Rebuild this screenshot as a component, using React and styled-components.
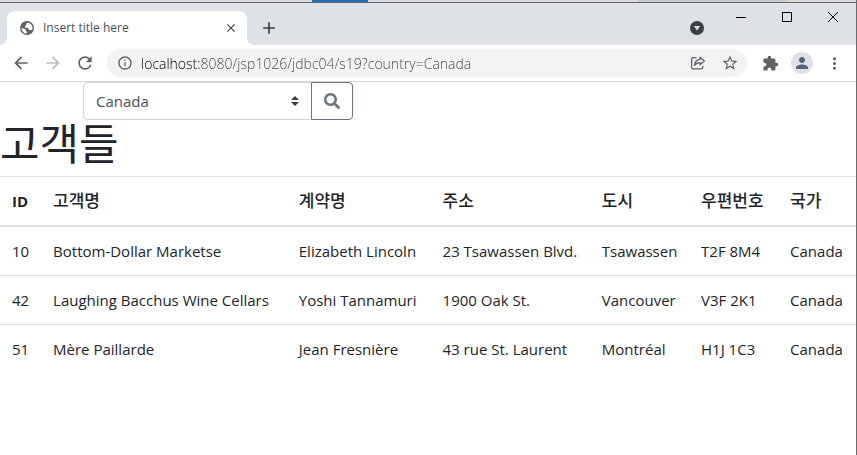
import React, { useState } from 'react';
import styled, { createGlobalStyle } from 'styled-components';
import {
  MdArrowBack,
  MdArrowForward,
  MdRefresh,
  MdInfoOutline,
  MdStarBorder,
  MdExtension,
  MdPerson,
  MdMoreVert,
  MdClose,
  MdAdd
} from 'react-icons/md';
import { FaSearch } from 'react-icons/fa';

const GlobalStyle = createGlobalStyle`
  * {
    box-sizing: border-box;
  }

  body {
    margin: 0;
    background: #fff;
    color: #212529;
    font-family: 'Open Sans', 'Noto Sans CJK KR', sans-serif;
    font-size: 15px;
    line-height: 24px;
  }

  button, input, select {
    font-family: inherit;
    margin: 0;
  }
`;

// Browser window
const Window = styled.div`
  display: flex;
  flex-direction: column;
  min-height: 100vh;
  border-right: 1px solid #6b6b6b;
`;

const Desktop = styled.div`
  height: 3px;
  border-bottom: 1px solid #666;
  background: linear-gradient(
    to right,
    #dcdcdc 36.4%,
    #1a6fb5 36.4% 43%,
    #dcdcdc 43% 74.5%,
    #c8cbd0 74.5% 92%,
    #dcdcdc 92%
  );
`;

const TabStrip = styled.div`
  display: flex;
  height: 42px;
  padding-left: 7px;
  background: #dee1e6;
`;

const Tab = styled.div`
  position: relative;
  display: flex;
  align-items: center;
  width: 240px;
  margin-top: 8px;
  padding: 0 8px 0 12px;
  border-radius: 8px 8px 0 0;
  background: #fff;
  color: #5f6368;

  &::before,
  &::after {
    content: '';
    position: absolute;
    bottom: 0;
    width: 8px;
    height: 8px;
  }

  &::before {
    right: 100%;
    background: radial-gradient(circle at 0 0, transparent 8px, #fff 8px);
  }

  &::after {
    left: 100%;
    background: radial-gradient(circle at 100% 0, transparent 8px, #fff 8px);
  }
`;

const TabTitle = styled.span`
  flex: 1;
  margin-left: 8px;
  font-size: 12px;
  line-height: 16px;
  color: #4d5156;
`;

const IconButton = styled.button`
  display: flex;
  align-items: center;
  justify-content: center;
  flex: none;
  width: ${(props) => props.$size || 28}px;
  height: ${(props) => props.$size || 28}px;
  padding: 0;
  border: 0;
  border-radius: 50%;
  background: none;
  color: ${(props) => props.$color || '#5f6368'};
`;

const NewTab = styled(IconButton)`
  margin: 11px 0 0 8px;
`;

const WindowControls = styled.div`
  display: flex;
  margin-left: auto;
`;

const TabSearch = styled(IconButton)`
  margin: 11px 7px 0 0;
`;

const CaptionButton = styled.button`
  display: flex;
  align-items: center;
  justify-content: center;
  width: 46px;
  height: 28px;
  padding: 0;
  border: 0;
  background: none;
  color: #000;
`;

const Toolbar = styled.div`
  display: flex;
  align-items: center;
  gap: 4px;
  height: 37px;
  padding: 0 8px 0 7px;
  border-bottom: 1px solid #d5d8dc;
`;

const AddressBar = styled.div`
  display: flex;
  align-items: center;
  gap: 4px;
  flex: 1;
  min-width: 0;
  height: 28px;
  margin: 0 5px 0 4px;
  padding: 0 3px 0 10px;
  border-radius: 14px;
  background: #f1f3f4;
  color: #5f6368;
`;

// The host is darker than the rest of the address
const Address = styled.input`
  flex: 1;
  min-width: 0;
  height: 24px;
  margin-left: 4px;
  padding: 0;
  border: 0;
  outline: 0;
  font-size: 14px;
  font-weight: 300;
  color: #44474b;
  background: linear-gradient(to right, #000 59px, #44474b 59px);
  -webkit-background-clip: text;
  background-clip: text;
  -webkit-text-fill-color: transparent;
`;

const Avatar = styled.span`
  display: flex;
  align-items: center;
  justify-content: center;
  width: 22px;
  height: 22px;
  border-radius: 50%;
  background: #dee1e6;
  color: #56607a;
`;

// Page
const Page = styled.main`
  flex: 1;
`;

const SearchForm = styled.form`
  display: flex;
  width: 270px;
  margin-left: 83px;
`;

const CountrySelect = styled.select`
  flex: 1;
  min-width: 0;
  height: 38px;
  padding: 6px 28px 6px 12px;
  border: 1px solid #ced4da;
  border-radius: 4px 0 0 4px;
  appearance: none;
  background: #fff
    url("data:image/svg+xml,%3csvg xmlns='http://www.w3.org/2000/svg' width='4' height='5' viewBox='0 0 4 5'%3e%3cpath fill='%23343a40' d='M2 0L0 2h4zm0 5L0 3h4z'/%3e%3c/svg%3e")
    right 12px center / 8px 10px no-repeat;
  color: #495057;
  font-size: 15px;
  line-height: 24px;
`;

const SearchButton = styled.button`
  display: flex;
  align-items: center;
  justify-content: center;
  width: 42px;
  height: 38px;
  margin-left: -1px;
  padding: 0;
  border: 1px solid #6c757d;
  border-radius: 0 4px 4px 0;
  background: #fff;
  color: #6c757d;
`;

const Heading = styled.h1`
  margin: 0 0 8px;
  font-size: 43px;
  font-weight: 400;
  line-height: 48px;
`;

const Table = styled.table`
  width: 100%;
  border-collapse: collapse;
  table-layout: fixed;
`;

const HeadCell = styled.th`
  width: ${(props) => props.$width};
  padding: 12px 0 12px 12px;
  border-top: 1px solid #dee2e6;
  border-bottom: 2px solid #dee2e6;
  font-size: 17px;
  font-weight: 500;
  text-align: left;
  white-space: nowrap;

  &:first-child {
    font-size: 15px;
    font-weight: 700;
  }
`;

const Cell = styled.td`
  padding: 12px 0 12px 12px;
  border-top: 1px solid #dee2e6;
  white-space: nowrap;
`;

const columns = [
  { key: 'id', label: 'ID', width: '4.8%' },
  { key: 'name', label: '고객명', width: '28.7%' },
  { key: 'contact', label: '계약명', width: '16.8%' },
  { key: 'address', label: '주소', width: '18.6%' },
  { key: 'city', label: '도시', width: '11.6%' },
  { key: 'postal', label: '우편번호', width: '10.4%' },
  { key: 'country', label: '국가', width: '9.1%' }
];

const customers = [
  {
    id: 10,
    name: 'Bottom-Dollar Marketse',
    contact: 'Elizabeth Lincoln',
    address: '23 Tsawassen Blvd.',
    city: 'Tsawassen',
    postal: 'T2F 8M4',
    country: 'Canada'
  },
  {
    id: 42,
    name: 'Laughing Bacchus Wine Cellars',
    contact: 'Yoshi Tannamuri',
    address: '1900 Oak St.',
    city: 'Vancouver',
    postal: 'V3F 2K1',
    country: 'Canada'
  },
  {
    id: 51,
    name: 'Mère Paillarde',
    contact: 'Jean Fresnière',
    address: '43 rue St. Laurent',
    city: 'Montréal',
    postal: 'H1J 1C3',
    country: 'Canada'
  }
];

const GlobeIcon = () => (
  <svg width="16" height="16" viewBox="0 0 16 16">
    <circle cx="8" cy="8" r="7" fill="currentColor" />
    <path
      d="M9.500 2.800C8 3 7.200 3.500 7.300 4.600 7.400 5.500 6.400 5.600 6 6.300c-.4.900.5 1.400 1.500 1.400 1.200 0 2 .3 2 1.300 0 .8.800 1 1.700 1l2-.1a5.600 5.600 0 0 0-3.700-7.100z M2.400 8.200c1.600 0 3.400.1 4 1 .5.800-.1 1.500.7 1.900.9.400.9 1.300.6 2.500A5.600 5.600 0 0 1 2.400 8.200z"
      fill="#fff"
    />
  </svg>
);

const ShareIcon = () => (
  <svg width="16" height="16" viewBox="0 0 16 16" fill="none" stroke="currentColor" strokeWidth="1.3" strokeLinejoin="round">
    <path d="M6.5 2.6H3.2a1.6 1.6 0 0 0-1.6 1.6v8a1.6 1.6 0 0 0 1.6 1.6h8a1.6 1.6 0 0 0 1.6-1.6v-1.4" />
    <path d="M10 2.2 14.4 6 10 9.8V7.6C7.400 7.600 5.800 8.500 4.500 10.400 4.900 7.200 6.800 4.800 10 4.400Z" />
  </svg>
);

const TabSearchIcon = () => (
  <svg width="14" height="14" viewBox="0 0 14 14">
    <circle cx="7" cy="7" r="7" fill="#3c4043" />
    <path d="M3.800 5h6.400L7 9.500z" fill="#dee1e6" />
  </svg>
);

const App = () => {
  const [country, setCountry] = useState('Canada');

  return (
    <>
      <GlobalStyle />
      <Window>
        <Desktop />
        <TabStrip>
          <Tab>
            <GlobeIcon />
            <TabTitle>Insert title here</TabTitle>
            <IconButton $size={16} $color="#3c4043" aria-label="Close tab">
              <MdClose size={14} stroke="currentColor" />
            </IconButton>
          </Tab>
          <NewTab $color="#3c4043" aria-label="New tab">
            <MdAdd size={20} />
          </NewTab>
          <WindowControls>
            <TabSearch aria-label="Search tabs">
              <TabSearchIcon />
            </TabSearch>
            <CaptionButton aria-label="Minimize">
              <svg width="10" height="10" viewBox="0 0 10 10">
                <path d="M0 5.500h10" stroke="currentColor" />
              </svg>
            </CaptionButton>
            <CaptionButton aria-label="Maximize">
              <svg width="10" height="10" viewBox="0 0 10 10">
                <rect x="0.500" y="0.500" width="9" height="9" fill="none" stroke="currentColor" />
              </svg>
            </CaptionButton>
            <CaptionButton aria-label="Close">
              <svg width="10" height="10" viewBox="0 0 10 10">
                <path d="M0 0l10 10M10 0L0 10" stroke="currentColor" />
              </svg>
            </CaptionButton>
          </WindowControls>
        </TabStrip>

        <Toolbar>
          <IconButton aria-label="Back">
            <MdArrowBack size={20} />
          </IconButton>
          <IconButton $color="#babcbe" aria-label="Forward">
            <MdArrowForward size={20} />
          </IconButton>
          <IconButton aria-label="Reload">
            <MdRefresh size={20} />
          </IconButton>
          <AddressBar>
            <MdInfoOutline size={16} />
            <Address
              type="text"
              aria-label="Address"
              defaultValue="localhost:8080/jsp1026/jdbc04/s19?country=Canada"
            />
            <IconButton aria-label="Share">
              <ShareIcon />
            </IconButton>
            <IconButton aria-label="Bookmark">
              <MdStarBorder size={18} />
            </IconButton>
          </AddressBar>
          <IconButton aria-label="Extensions">
            <MdExtension size={17} />
          </IconButton>
          <IconButton aria-label="Profile">
            <Avatar>
              <MdPerson size={18} />
            </Avatar>
          </IconButton>
          <IconButton aria-label="Menu">
            <MdMoreVert size={19} />
          </IconButton>
        </Toolbar>

        <Page>
          <SearchForm onSubmit={(e) => e.preventDefault()}>
            <CountrySelect
              aria-label="Country"
              value={country}
              onChange={(e) => setCountry(e.target.value)}
            >
              <option value="Canada">Canada</option>
            </CountrySelect>
            <SearchButton type="submit" aria-label="Search">
              <FaSearch size={16} />
            </SearchButton>
          </SearchForm>

          <Heading>고객들</Heading>

          <Table>
            <thead>
              <tr>
                {columns.map((column) => (
                  <HeadCell key={column.key} $width={column.width} scope="col">
                    {column.label}
                  </HeadCell>
                ))}
              </tr>
            </thead>
            <tbody>
              {customers.map((customer) => (
                <tr key={customer.id}>
                  {columns.map((column) => (
                    <Cell key={column.key}>{customer[column.key]}</Cell>
                  ))}
                </tr>
              ))}
            </tbody>
          </Table>
        </Page>
      </Window>
    </>
  );
};

export default App;
